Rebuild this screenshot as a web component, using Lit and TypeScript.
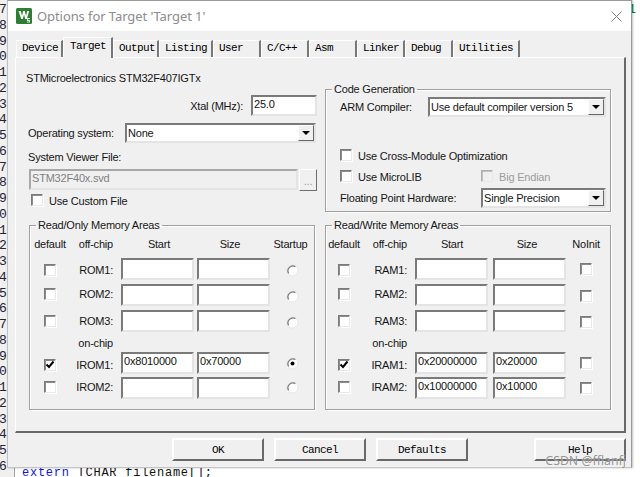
import { LitElement, html, css, svg } from "lit";
import { customElement } from "lit/decorators.js";

type Row = { label: string; start?: string; size?: string; checked?: boolean; off: number; last: number; lastCheck: number; selected?: boolean };

const digits = "789012345678901234567890123456".split("");
const tabs: [string, number][] = [["Device", 47], ["Target", 50], ["Output", 46], ["Listing", 54], ["User", 48], ["C/C++", 48], ["Asm", 48], ["Linker", 48], ["Debug", 48], ["Utilities", 67]];

const romRows: Row[] = [
  { label: "ROM1:", off: 6, last: 6, lastCheck: 5 },
  { label: "ROM2:", off: 4, last: 6, lastCheck: 6 },
  { label: "ROM3:", off: 5, last: 6, lastCheck: 6 },
  { label: "IROM1:", start: "0x8010000", size: "0x70000", checked: true, off: 7, last: 5, lastCheck: 5, selected: true },
  { label: "IROM2:", off: 4, last: 4, lastCheck: 5 },
];
const ramRows: Row[] = [
  { label: "RAM1:", off: 6, last: 6, lastCheck: 5 },
  { label: "RAM2:", off: 4, last: 6, lastCheck: 6 },
  { label: "RAM3:", off: 5, last: 6, lastCheck: 6 },
  { label: "IRAM1:", start: "0x20000000", size: "0x20000", checked: true, off: 7, last: 5, lastCheck: 5 },
  { label: "IRAM2:", start: "0x10000000", size: "0x10000", off: 4, last: 4, lastCheck: 5 },
];

@customElement("app-root")
export class AppRoot extends LitElement {
  static styles = css`
    :host { display: block; position: relative; width: 640px; height: 477px; overflow: hidden; background: #fff; font-family: "Liberation Sans", Arial, sans-serif; font-size: 11px; letter-spacing: -.2px; line-height: 14px; color: #151515; }
    .editor { display: flex; height: 477px; font-family: "Liberation Mono", monospace; font-size: 13px; letter-spacing: 0; }
    .gutter { width: 14px; border-right: 1px solid #a0a0a0; background: #f0f0f0; display: flex; flex-direction: column; padding-top: 2px; overflow: hidden; }
    .gutter span { height: 15.75px; line-height: 15.75px; margin-left: -1px; color: #223; }
    .code { flex: 1; display: flex; flex-direction: column; justify-content: space-between; padding: 2px 4px 0 7px; line-height: 15px; }
    .code .top-digit { align-self: flex-end; color: #0a7a2a; }
    .code .line { margin-bottom: -4px; color: #111; white-space: pre; font-size: 12px; letter-spacing: .74px; }
    .kw { color: #1414d8; }

    .window { position: absolute; left: 7px; top: 0; width: 625px; height: 468px; box-sizing: border-box; background: #f0f0f0; border: 1px solid #9a9a9a; border-bottom: 1px solid #c4c4c4; border-left-color: #c0c0c0; box-shadow: 1px 0 2px rgba(0,0,0,.25); display: flex; flex-direction: column; }
    .title { height: 30px; background: #fff; display: flex; align-items: center; padding-left: 8px; gap: 5px; flex: none; }
    .title .name { font-family: "Noto Sans", sans-serif; font-size: 13px; color: #8c8c8c; letter-spacing: -.08px; line-height: 20px; }
    .title .close { margin-left: auto; margin-right: 9px; display: block; }
    .title .logo { display: block; }

    .tabs { display: flex; align-items: flex-end; height: 26px; padding-left: 8px; flex: none; font-family: "Liberation Mono", monospace; font-size: 11px; letter-spacing: -.6px; color: #000; }
    .tab { height: 17px; box-sizing: border-box; border-top: 1px solid #fff; border-left: 1px solid #fff; border-right: 2px solid #777; padding-left: 5px; line-height: 15px; white-space: nowrap; }
    .tab.active { height: 21px; margin-bottom: -1px; position: relative; z-index: 1; background: #f0f0f0; padding-left: 6px; line-height: 16px; }

    .panel { margin-left: 7px; width: 611px; height: 376px; flex: none; box-sizing: border-box; border: 1px solid #fff; border-right: 2px solid #696969; border-bottom: 2px solid #696969; padding-left: 10px; }
    .top { display: grid; grid-template-columns: 291px 286px; column-gap: 8px; height: 154px; }
    .left { display: flex; flex-direction: column; padding-top: 13px; }
    .xtal { display: flex; justify-content: flex-end; align-items: center; gap: 8px; margin-top: 10px; }
    .os { display: flex; align-items: center; margin-top: 7px; padding-left: 2px; }
    .os .lbl { width: 97px; }
    .svd-label { margin-top: 7px; padding-left: 2px; }
    .svd { display: flex; gap: 1px; margin: 5px 0 0 3px; }
    .custom { margin: 3px 0 0 5px; }

    .field { box-sizing: border-box; background: #fff; border: 2px solid; border-color: #7a7a7a #e4e4e4 #e4e4e4 #7a7a7a; padding: 0 0 0 1px; line-height: 14px; color: #111; white-space: nowrap; overflow: hidden; }
    .xtal .field { width: 66px; height: 21px; }
    .svd .field { width: 269px; height: 21px; background: #f0f0f0; color: #808080; border-color: #a8a8a8 #e4e4e4 #e4e4e4 #a8a8a8; line-height: 15px; }
    .dots { width: 18px; height: 22px; box-sizing: border-box; background: #f0f0f0; border: 1px solid; border-color: #fff #6e6e6e #6e6e6e #fff; color: #9a9a9a; text-align: center; line-height: 22px; }

    .select { box-sizing: border-box; height: 20px; background: #fff; border: 2px solid; border-color: #7a7a7a #e4e4e4 #e4e4e4 #7a7a7a; display: flex; align-items: stretch; padding-left: 1px; line-height: 16px; }
    .select .val { flex: 1; white-space: nowrap; overflow: hidden; }
    .select .arrow { width: 16px; background: #f0f0f0; box-sizing: border-box; border: 1px solid; border-color: #fff #666 #666 #fff; display: flex; align-items: center; justify-content: center; }
    .tri { width: 0; height: 0; border-left: 4px solid transparent; border-right: 4px solid transparent; border-top: 4px solid #000; }

    fieldset { box-sizing: border-box; margin: 0; padding: 0; min-width: 0; border: 1px solid #a0a0a0; box-shadow: 1px 1px 0 #fff, inset 1px 1px 0 #fff; }
    legend { margin-left: 6px; padding: 0 2px; line-height: 14px; }
    .codegen { height: 130px; margin-top: 24px; }
    .cg-body { padding-left: 14px; }
    .arm { display: flex; align-items: center; margin-top: 1px; }
    .arm .lbl { width: 88px; }
    .arm .select { width: 178px; }
    .cross { margin-top: 32px; }
    .micro { display: flex; margin-top: 7px; }
    .micro > :first-child { width: 141px; }
    .fpu { display: flex; align-items: center; margin-top: 4px; }
    .fpu .lbl { width: 141px; }
    .fpu .select { width: 125px; }
    .os .select { width: 191px; }

    .check { display: flex; align-items: flex-start; gap: 6px; height: 14px; white-space: nowrap; }
    .cb { flex: none; display: block; width: 12px; height: 12px; box-sizing: border-box; background: #fff; border: 1px solid; border-color: #7a7a7a #e8e8e8 #e8e8e8 #7a7a7a; box-shadow: inset 1px 1px 0 #8c8c8c, 1px 1px 0 #fff; position: relative; }
    .cb svg { display: block; position: absolute; left: 0; top: 0; }
    .cb.off { background: #f0f0f0; border-color: #b0b0b0 #e8e8e8 #e8e8e8 #b0b0b0; box-shadow: inset 1px 1px 0 #c0c0c0; }
    .muted { color: #9c9c9c; }

    .groups { display: grid; grid-template-columns: 286px 286px; column-gap: 10px; margin: 6px 0 0 3px; }
    .memory { height: 192px; }
    .mem { display: grid; grid-template-rows: 21px 26px 26px 26px 16px 25px 25px; margin-top: 5px; align-items: start; }
    .mem.ro { grid-template-columns: 40px 51px 76px 76px 39px; }
    .mem.rw { grid-template-columns: 36px 53px 78px 76px 34px; }
    .head { text-align: center; white-space: nowrap; }
    .head.off { text-align: right; padding-right: 8px; }
    .ro .size { padding-right: 10px; }
    .ro .last { padding-right: 4px; }
    .rw .start { padding-right: 4px; }
    .rw .size { padding-right: 8px; }
    .onchip { grid-column: 2; text-align: right; padding-right: 8px; white-space: nowrap; }
    .onchip-fill { grid-column: 3 / 6; }
    .rowlabel { text-align: right; padding-right: 8px; white-space: nowrap; }
    .center { display: flex; justify-content: center; }
    .mem .field { width: 73px; height: 22px; }
    .radio { display: block; }

    .footer { display: flex; gap: 10px; padding: 5px 5px 0 164px; }
    button { width: 92px; height: 23px; margin: 0; padding: 0; box-sizing: border-box; background: #f0f0f0; border: 2px solid; border-color: #fff #696969 #696969 #fff; font-family: "Liberation Mono", monospace; font-size: 11px; letter-spacing: -.6px; color: #000; }
    button.help { margin-left: auto; }

    .watermark { position: absolute; right: 14px; top: 453px; font-family: "Noto Sans", sans-serif; font-size: 12.3px; letter-spacing: 0; line-height: 16px; color: rgba(120,120,120,.8); text-shadow: 0 0 1px rgba(255,255,255,.9); white-space: nowrap; }
  `;

  private cb(checked = false, disabled = false) {
    return html`<span class="cb ${disabled ? "off" : ""}">${checked
      ? html`<svg width="10" height="10" viewBox="0 0 10 10"><path d="M1.5 4.5 L4 7 L8.5 1.5" fill="none" stroke="#000" stroke-width="2"/></svg>`
      : ""}</span>`;
  }

  private select(v: string) {
    return html`<div class="select"><span class="val">${v}</span><span class="arrow"><span class="tri"></span></span></div>`;
  }

  private radio(on = false) {
    return svg`<svg class="radio" width="13" height="13" viewBox="0 0 13 13">
      <circle cx="6.5" cy="6.5" r="5.5" fill="#fff" stroke="#e4e4e4"/>
      <path d="M2.6 9.4 A5 5 0 0 1 9.4 2.6" fill="none" stroke="#777" stroke-width="1.2"/>
      ${on ? svg`<circle cx="6.5" cy="6.5" r="2" fill="#000"/>` : ""}
    </svg>`;
  }

  private memory(title: string, cls: string, off: string, rows: Row[], last: string, isRam: boolean) {
    const row = (r: Row) => html`
      <div class="center" style="margin-top:${r.off}px">${this.cb(r.checked)}</div>
      <div class="rowlabel" style="margin-top:${r.off - 1}px">${r.label}</div>
      <div class="field">${r.start ?? ""}</div>
      <div class="field">${r.size ?? ""}</div>
      ${isRam
        ? html`<div class="center" style="margin-top:${r.lastCheck}px">${this.cb()}</div>`
        : html`<div class="center" style="margin-top:${r.last}px">${this.radio(r.selected)}</div>`}
    `;
    return html`<fieldset class="memory">
      <legend>${title}</legend>
      <div class="mem ${cls}">
        <div class="head">default</div>
        <div class="head off">${off}</div>
        <div class="head start">Start</div>
        <div class="head size">Size</div>
        <div class="head last">${last}</div>
        ${rows.slice(0, 3).map(row)}
        <div class="onchip">on-chip</div>
        <div class="onchip-fill"></div>
        ${rows.slice(3).map(row)}
      </div>
    </fieldset>`;
  }

  render() {
    return html`
      <div class="editor">
        <div class="gutter">${digits.map((d) => html`<span>${d}</span>`)}</div>
        <div class="code">
          <span class="top-digit">1</span>
          <span class="line"><span class="kw">extern</span> TCHAR filename[];</span>
        </div>
      </div>
      <div class="window">
        <div class="title">
          <svg class="logo" width="16" height="16" viewBox="0 0 16 16">
            <rect width="16" height="16" rx="1.5" fill="#2f7d32"/>
            <path d="M2.5 3 L4.8 3 L6 8 L7.2 3 L8.8 3 L10 8 L11.2 3 L13.2 3 L10.8 11 L9.2 11 L8 6.5 L6.8 11 L5.2 11 Z" fill="#fff"/>
            <path d="M11 10 h3 v1 h-2 v1 h2 v2.5 h-3 v-1 h2 v-.6 h-2 Z" fill="#dfeedd"/>
          </svg>
          <span class="name">Options for Target 'Target 1'</span>
          <svg class="close" width="11" height="11" viewBox="0 0 11 11"><path d="M.5 .5 L10.5 10.5 M10.5 .5 L.5 10.5" stroke="#7d7d7d" stroke-width="1"/></svg>
        </div>
        <div class="tabs">
          ${tabs.map(([t, w]) => html`<div class="tab ${t === "Target" ? "active" : ""}" style="width:${w}px">${t}</div>`)}
        </div>
        <div class="panel">
          <div class="top">
            <div class="left">
              <div>STMicroelectronics STM32F407IGTx</div>
              <div class="xtal"><span>Xtal (MHz):</span><div class="field">25.0</div></div>
              <div class="os"><span class="lbl">Operating system:</span>${this.select("None")}</div>
              <div class="svd-label">System Viewer File:</div>
              <div class="svd"><div class="field">STM32F40x.svd</div><div class="dots">...</div></div>
              <div class="check custom">${this.cb()}<span>Use Custom File</span></div>
            </div>
            <fieldset class="codegen">
              <legend>Code Generation</legend>
              <div class="cg-body">
                <div class="arm"><span class="lbl">ARM Compiler:</span>${this.select("Use default compiler version 5")}</div>
                <div class="check cross">${this.cb()}<span>Use Cross-Module Optimization</span></div>
                <div class="micro">
                  <div class="check">${this.cb()}<span>Use MicroLIB</span></div>
                  <div class="check">${this.cb(false, true)}<span class="muted">Big Endian</span></div>
                </div>
                <div class="fpu"><span class="lbl">Floating Point Hardware:</span>${this.select("Single Precision")}</div>
              </div>
            </fieldset>
          </div>
          <div class="groups">
            ${this.memory("Read/Only Memory Areas", "ro", "off-chip", romRows, "Startup", false)}
            ${this.memory("Read/Write Memory Areas", "rw", "off-chip", ramRows, "NoInit", true)}
          </div>
        </div>
        <div class="footer">
          <button>OK</button><button>Cancel</button><button>Defaults</button><button class="help">Help</button>
        </div>
      </div>
      <div class="watermark">CSDN @fflanfj</div>
    `;
  }
}
